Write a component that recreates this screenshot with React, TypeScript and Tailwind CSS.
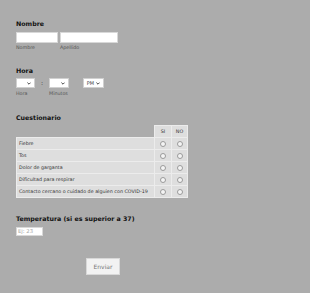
import React from 'react';

const sintomas = [
  'Fiebre',
  'Tos',
  'Dolor de garganta',
  'Dificultad para respirar',
  'Contacto cercano o cuidado de alguien con COVID-19',
];

function Chevron() {
  return (
    <svg width="4" height="3" viewBox="0 0 4 3" className="shrink-0">
      <path d="M0.4 0.6 L2 2.2 L3.6 0.6" fill="none" stroke="#333" strokeWidth="0.9" />
    </svg>
  );
}

function FakeSelect({ width, value }: { width: string; value?: string }) {
  return (
    <div className={`${width} h-[10px] bg-white border border-[#d0d0d0] flex items-center justify-end gap-[2px] pr-[3px]`}>
      {value && <span className="text-[5px] leading-none text-[#444]">{value}</span>}
      <Chevron />
    </div>
  );
}

function Radio() {
  return <span className="block mx-auto w-[6px] h-[6px] rounded-full border border-[#9a9a9a] bg-[#f4f4f4]" />;
}

export default function App() {
  return (
    <div className="min-h-screen bg-[#acacac] pl-4 pt-[20px] text-[#111]" style={{ fontFamily: '"DejaVu Sans", Verdana, sans-serif' }}>
      <div className="w-[174px]">
        {/* Nombre */}
        <h2 className="text-[6.3px] font-bold leading-[8px]">Nombre</h2>
        <div className="flex gap-[2px] mt-[4px]">
          <div>
            <div className="w-[42px] h-[11px] bg-white border border-[#d8d8d8]" />
            <p className="text-[4.8px] text-[#555] mt-[2px] leading-[6px]">Nombre</p>
          </div>
          <div>
            <div className="w-[58px] h-[11px] bg-white border border-[#d8d8d8]" />
            <p className="text-[4.8px] text-[#555] mt-[2px] leading-[6px]">Apellido</p>
          </div>
        </div>

        {/* Hora */}
        <h2 className="text-[6.3px] font-bold leading-[8px] mt-[16px]">Hora</h2>
        <div className="flex items-start mt-[3px]">
          <div>
            <FakeSelect width="w-[19px]" />
            <p className="text-[4.8px] text-[#555] mt-[3px] leading-[6px]">Hora</p>
          </div>
          <span className="w-[14px] text-center text-[6px] leading-[10px] text-[#333]">:</span>
          <div>
            <FakeSelect width="w-[20px]" />
            <p className="text-[4.8px] text-[#555] mt-[3px] leading-[6px]">Minutos</p>
          </div>
          <div className="ml-[14px]">
            <FakeSelect width="w-[21px]" value="PM" />
          </div>
        </div>

        {/* Cuestionario */}
        <h2 className="text-[6.3px] font-bold leading-[8px] mt-[17px]">Cuestionario</h2>
        <table className="mt-[3px] border-collapse text-[4.8px] text-[#333]">
          <thead>
            <tr className="h-[12px]">
              <th className="w-[138px] p-0" />
              <th className="w-[17px] p-0 font-normal bg-[#dedede] border border-[#ececec]">SI</th>
              <th className="w-[16px] p-0 font-normal bg-[#dedede] border border-[#ececec]">NO</th>
            </tr>
          </thead>
          <tbody>
            {sintomas.map((s) => (
              <tr key={s} className="h-[12px]">
                <td className="p-0 pl-[2px] bg-[#dedede] border border-[#ececec] text-left">{s}</td>
                <td className="p-0 bg-[#dedede] border border-[#ececec]"><Radio /></td>
                <td className="p-0 bg-[#dedede] border border-[#ececec]"><Radio /></td>
              </tr>
            ))}
          </tbody>
        </table>

        {/* Temperatura */}
        <h2 className="text-[6.3px] font-bold leading-[8px] mt-[17px]">Temperatura (si es superior a 37)</h2>
        <div className="mt-[4px] w-[27px] h-[9px] bg-white border border-[#d8d8d8] flex items-center pl-[1px]">
          <span className="text-[5.3px] leading-none text-[#a8a8a8]">Ej: 23</span>
        </div>

        <div className="flex justify-center mt-[22px]">
          <button className="w-[34px] h-[17px] bg-[#f2f2f2] border border-[#d8d8d8] text-[6px] text-[#777]">Enviar</button>
        </div>
      </div>
    </div>
  );
}
